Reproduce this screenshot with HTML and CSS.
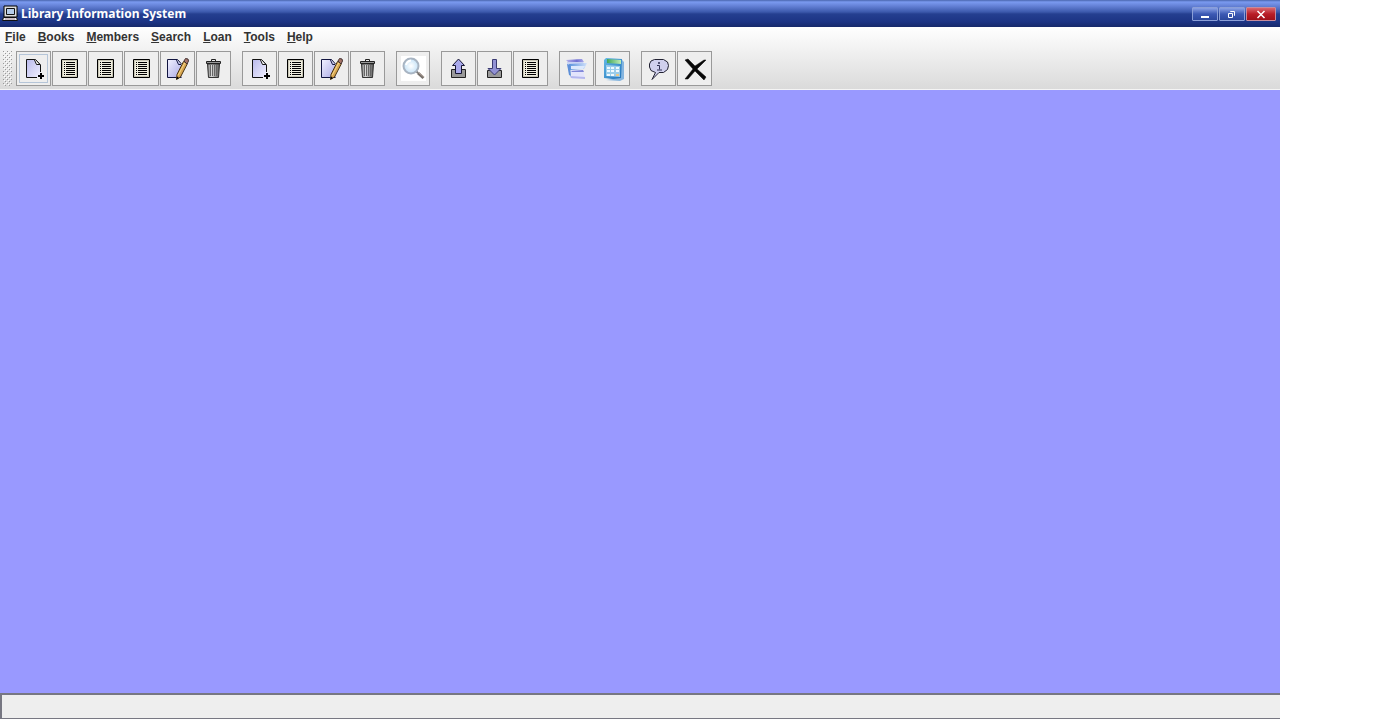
FILE: index.html
```html
<!DOCTYPE html>
<html lang="en">
<head>
<meta charset="utf-8">
<title>Library Information System</title>
<link rel="stylesheet" href="styles.css">
</head>
<body>
<svg class="defs" aria-hidden="true">
  <defs>
    <linearGradient id="paper" x1="0" y1="0" x2="1" y2="1"><stop offset="0" stop-color="#b9b9ec"/><stop offset="1" stop-color="#f0f0ff"/></linearGradient>
    <linearGradient id="paper2" x1="0" y1="0" x2="1" y2="1"><stop offset="0" stop-color="#f2f2ff"/><stop offset="1" stop-color="#a9a9e6"/></linearGradient>
    <linearGradient id="metal"><stop offset="0" stop-color="#777"/><stop offset=".35" stop-color="#ddd"/><stop offset="1" stop-color="#555"/></linearGradient>
    <linearGradient id="sheet" x1="0" y1="0" x2="1" y2="0"><stop offset="0" stop-color="#b9b4ea"/><stop offset=".6" stop-color="#6f6fd2"/><stop offset="1" stop-color="#a9aaea"/></linearGradient>
    <linearGradient id="sheet2" x1="0" y1="0" x2="1" y2="0"><stop offset="0" stop-color="#5b93dc"/><stop offset="1" stop-color="#cfe0fb"/></linearGradient>
    <linearGradient id="calc" x1="0" y1="0" x2="1" y2="1"><stop offset="0" stop-color="#62b8e6"/><stop offset="1" stop-color="#1f6fb8"/></linearGradient>
    <linearGradient id="screen"><stop offset="0" stop-color="#3fa65a"/><stop offset="1" stop-color="#c0edb5"/></linearGradient>
    <radialGradient id="lens"><stop offset="0" stop-color="#fff"/><stop offset="1" stop-color="#c5e2f7"/></radialGradient>
    <symbol id="add" viewBox="1 1 33 33">
      <path d="M10.500 8.500H20L24.500 14V26.500H10.500Z" fill="url(#paper)"/>
      <path d="M24.500 21V14L19.500 8.500H10.500V26.500H21" fill="none" stroke="#111"/>
      <path d="M18.500 9L20.500 13.500H24L19.500 8.500" fill="#fff" stroke="#111"/>
      <path d="M25 22V28M22 25H28" stroke="#000" stroke-width="2"/>
    </symbol>
    <symbol id="list" viewBox="1 1 33 33">
      <path d="M9.500 8.500H25.500V26.500H9.500Z" fill="#c9c7b6" stroke="#000"/>
      <path d="M11 10H24V25H11Z" fill="#efeddf"/>
      <path d="M12 11.500H13M12 13.500H13M12 15.500H13M12 17.500H13M12 19.500H13M12 21.500H13M12 23.500H13M14 11.500H23M14 13.500H23M14 15.500H23M14 17.500H23M14 19.500H23M14 21.500H23M14 23.500H23" stroke="#000"/>
    </symbol>
    <symbol id="edit" viewBox="1 1 33 33">
      <path d="M7.500 8.500H17L21.500 14V26.500H7.500Z" fill="url(#paper2)"/>
      <path d="M21.500 26.500H7.500V8.500H17.500L21.500 13M16.500 9L18.500 13.500H21" fill="none" stroke="#111540"/>
      <path d="M23.500 10.500L27.500 12.500L20.500 26L16.500 28.500L17 23.500Z" fill="#d9a750" stroke="#4a3413"/>
      <path d="M25 11.500L18 24.500" stroke="#f6d88d"/>
      <path d="M24 10L25.500 7.500L28 8L28.500 10L27 13Z" fill="#a77569" stroke="#443333"/>
      <path d="M16.500 28.500L17 25.500L19 27Z" fill="#000"/>
    </symbol>
    <symbol id="trash" viewBox="1 1 33 33">
      <path d="M11.500 13H23.500L22.500 26.500H12.500Z" fill="url(#metal)" stroke="#333"/>
      <path d="M10.500 12.500V10.500H24.500V12.500Z" fill="#999" stroke="#222"/>
      <path d="M15.500 10V8.500H19.500V10" fill="none" stroke="#222"/>
      <path d="M14.500 14V25M16.500 14V25M18.500 14V25M20.500 14V25" stroke="#666"/>
    </symbol>
    <symbol id="search" viewBox="1 1 33 33">
      <path d="M5 5H30V30H5Z" fill="#fff"/>
      <path d="M20.500 20.500L22 22" stroke="#777" stroke-width="2"/>
      <path d="M22 22L27.500 27" stroke="#77716c" stroke-width="3"/>
      <path d="M23 22L28 26" stroke="#b5a59b"/>
      <circle cx="15" cy="15" r="7.500" fill="url(#lens)" stroke="#a8b4c2" stroke-width="2"/>
      <path d="M10 14Q11 10 15 9.500" fill="none" stroke="#fff" stroke-width="2"/>
    </symbol>
    <symbol id="out" viewBox="1 1 33 33">
      <path d="M10.500 18.500H24.500V26.500H10.500Z" fill="#999" stroke="#222"/>
      <path d="M17.500 8L23.500 14.500H20.500V22.500H14.500V14.500H11.500Z" fill="#a9a9ec" stroke="#141432"/>
    </symbol>
    <symbol id="in" viewBox="1 1 33 33">
      <path d="M10.500 19.500H24.500V26.500H10.500Z" fill="#999" stroke="#222"/>
      <path d="M15.500 8.500H19.500V17.500H24L17.500 24L11 17.500H15.500Z" fill="#9292d5" stroke="#3a3a72"/>
    </symbol>
    <symbol id="notes" viewBox="1 1 33 33">
      <path d="M7 9L23 8L25 11H9Z" fill="url(#sheet)"/>
      <path d="M8 11H24L26 14L24 18H9Z" fill="#c7d2f4"/>
      <path d="M10 13L28 12L25 18L11 19Z" fill="url(#sheet2)"/>
      <path d="M12 15H26L24 18H12Z" fill="#dce9fd"/>
      <path d="M8 13L11 14L12 25L10 24Z" fill="#5e8fd8"/>
      <path d="M12 19H24L26 27L13 28Z" fill="#e3e4fc"/>
      <path d="M12 20L24 19L25 21H13Z" fill="#8087d8"/>
      <path d="M11 25L26 26V28L12 27Z" fill="#b4b7ee"/>
    </symbol>
    <symbol id="calculator" viewBox="1 1 33 33">
      <path d="M11 7L27 8L28 27L25 29L9 27V9Z" fill="url(#calc)"/>
      <path d="M27 9L29 11V28L25 30L11 29L26 27Z" fill="#85b5df"/>
      <path d="M12 8L26 9V13L12 12Z" fill="url(#screen)"/>
      <path d="M11 14L25 15V26L11 25Z" fill="#9bcdea"/>
      <path d="M12 16H15V18H12ZM16 16H19V18H16ZM21 16H24V18H21ZM12 19H15V21H12ZM16 19H19V21H16ZM21 19H24V21H21ZM12 23H15V25H12ZM16 23H19V25H16Z" fill="#eff9ff"/>
      <path d="M21 23H24V25H21Z" fill="#e8c78a"/>
    </symbol>
    <symbol id="about" viewBox="1 1 33 33">
      <path d="M13.500 8.500H22.500L26.500 11L27.500 14.500L26.500 18.500L22.500 21.500H18L11 28.500L14.500 21.500L10 19.500L8.500 16V13L10 10Z" fill="#d0d0ed" stroke="#222233"/>
      <path d="M16 14.500H18.500V18.500M16 19H21" fill="none" stroke="#333355"/>
      <path d="M17 11H19V13H17Z" fill="#555577"/>
    </symbol>
    <symbol id="exit" viewBox="1 1 33 33">
      <path d="M8 9L11 8L18 15L27 9L29 9L20 18L29 26L27 29L18 20L11 28L8 28L16 18Z" fill="#080808" stroke="#080808" stroke-width=".5"/>
    </symbol>
  </defs>
</svg>
<div class="window">
  <header class="titlebar">
    <svg class="app-icon" viewBox="0 0 17 17" aria-hidden="true">
      <path d="M2 1H15V12H2Z" fill="#ddd" stroke="#000"/>
      <path d="M4.500 3.500H12.500V9.500H4.500Z" fill="#b7cdea" stroke="#111"/>
      <path d="M1.500 12.500H14.500L15.500 15.500H.5Z" fill="#eee" stroke="#111"/>
      <path d="M3 14H13" stroke="#a68a9a"/>
    </svg>
    <h1 class="title">Library Information System</h1>
    <div class="controls">
      <button class="control" aria-label="Minimize"><svg viewBox="0 0 12 12"><path d="M2 9H10" stroke="#fff" stroke-width="2"/></svg></button>
      <button class="control" aria-label="Restore"><svg viewBox="0 0 12 12"><path d="M4.500 4V3.500H8.500V7.500H8M2.500 5.500H6.500V9.500H2.500Z" fill="none" stroke="#fff"/></svg></button>
      <button class="control close" aria-label="Close"><svg viewBox="0 0 12 12"><path d="M2.500 3L9.500 10M9.500 3L2.500 10" stroke="#fff" stroke-width="1.500"/></svg></button>
    </div>
  </header>
  <div class="bars">
    <nav class="menubar">
      <button class="menu"><u>F</u>ile</button>
      <button class="menu"><u>B</u>ooks</button>
      <button class="menu"><u>M</u>embers</button>
      <button class="menu"><u>S</u>earch</button>
      <button class="menu"><u>L</u>oan</button>
      <button class="menu"><u>T</u>ools</button>
      <button class="menu"><u>H</u>elp</button>
    </nav>
    <div class="toolbar" role="toolbar" aria-label="Main">
      <svg class="grip" aria-hidden="true">
        <defs><pattern id="dots" width="4" height="4" patternUnits="userSpaceOnUse"><path d="M0 0H1V1H0ZM2 2H3V3H2Z" fill="#999"/><path d="M1 1H2V2H1ZM3 3H4V4H3Z" fill="#fff"/></pattern></defs>
        <rect width="100%" height="100%" fill="url(#dots)"/>
      </svg>
      <div class="group">
        <button class="tool focused" aria-label="Add book"><svg><use href="#add"/></svg></button>
        <button class="tool" aria-label="List books"><svg><use href="#list"/></svg></button>
        <button class="tool" aria-label="List available books"><svg><use href="#list"/></svg></button>
        <button class="tool" aria-label="List borrowed books"><svg><use href="#list"/></svg></button>
        <button class="tool" aria-label="Edit book"><svg><use href="#edit"/></svg></button>
        <button class="tool" aria-label="Remove book"><svg><use href="#trash"/></svg></button>
      </div>
      <div class="group">
        <button class="tool" aria-label="Add member"><svg><use href="#add"/></svg></button>
        <button class="tool" aria-label="List members"><svg><use href="#list"/></svg></button>
        <button class="tool" aria-label="Edit member"><svg><use href="#edit"/></svg></button>
        <button class="tool" aria-label="Remove member"><svg><use href="#trash"/></svg></button>
      </div>
      <div class="group">
        <button class="tool narrow" aria-label="Search"><svg><use href="#search"/></svg></button>
      </div>
      <div class="group">
        <button class="tool" aria-label="Borrow book"><svg><use href="#out"/></svg></button>
        <button class="tool" aria-label="Return book"><svg><use href="#in"/></svg></button>
        <button class="tool" aria-label="List loans"><svg><use href="#list"/></svg></button>
      </div>
      <div class="group">
        <button class="tool" aria-label="Notes"><svg><use href="#notes"/></svg></button>
        <button class="tool" aria-label="Calculator"><svg><use href="#calculator"/></svg></button>
      </div>
      <div class="group">
        <button class="tool" aria-label="About"><svg><use href="#about"/></svg></button>
        <button class="tool" aria-label="Exit"><svg><use href="#exit"/></svg></button>
      </div>
    </div>
  </div>
  <main class="desktop"></main>
  <footer class="status"></footer>
</div>
</body>
</html>
```
FILE: styles.css
```css
* { box-sizing: border-box; }
body {
  margin: 0;
  background: #fff;
  font-family: "Liberation Sans", Arial, sans-serif;
}
.defs { position: absolute; width: 0; height: 0; }
.window {
  display: flex;
  flex-direction: column;
  min-height: 100vh;
  margin-right: 93px;
  padding-bottom: 1px;
}
.titlebar {
  display: flex;
  align-items: center;
  height: 27px;
  padding: 0 4px 0 2px;
  background: linear-gradient(#4a66ae 0, #7a9af0 2px, #6481d6 6px, #3c59ac 12px, #253f90 14px, #1c3484 22px, #172a6b 27px);
}
.app-icon { width: 17px; height: 17px; }
.title {
  flex: 1;
  margin: 0 0 0 2px;
  color: #fff;
  font-family: "Noto Sans", sans-serif;
  font-size: 12px;
  line-height: 16px;
}
.controls { display: flex; gap: 1px; }
.control {
  display: grid;
  place-items: center;
  width: 26px;
  height: 14px;
  padding: 0;
  border: 1px solid #8b9fd8;
  border-radius: 1px;
  background: linear-gradient(#8ba2e6, #3c59b4 50%, #2b479d);
}
.control svg { width: 12px; height: 12px; }
.close {
  width: 30px;
  border-color: #c78b9c;
  background: linear-gradient(#d9666d, #b91e27 50%, #a01019);
}
.bars { background: linear-gradient(#fff, #dadada); border-bottom: 1px solid #f4f4f4; }
.menubar { display: flex; align-items: flex-start; gap: 12px; height: 23px; padding-left: 5px; }
.menu {
  padding: 0;
  border: 0;
  background: none;
  color: #333;
  font: bold 12px/21px "Liberation Sans", Arial, sans-serif;
}
.menu u { text-underline-offset: 1px; }
.toolbar { display: flex; gap: 11px; padding: 1px 0 3px 3px; }
.grip { width: 9px; height: 35px; margin-right: -7px; }
.group { display: flex; gap: 1px; }
.tool {
  display: grid;
  place-items: center;
  width: 35px;
  height: 35px;
  padding: 0;
  border: 1px solid #999;
  background: #eee;
}
.tool svg, .tool::before { grid-area: 1 / 1; }
.tool svg { width: 33px; height: 33px; }
.narrow { width: 34px; }
.focused::before {
  content: "";
  width: 27px;
  height: 27px;
  border: 1px solid #b5c5d8;
}
.desktop { flex: 1; background: #9999ff; }
.status {
  height: 26px;
  border: solid #777782;
  border-width: 2px 0 1px 2px;
  background: #eee;
}
```
